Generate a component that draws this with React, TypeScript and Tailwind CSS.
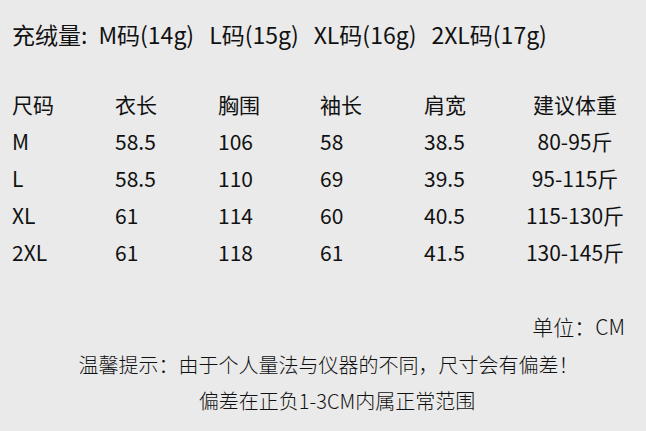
const FONT = "font-['Noto_Sans_CJK_SC','Noto_Sans',sans-serif]"

const rows = [
  ['M', '58.5', '106', '58', '38.5', '80-95斤'],
  ['L', '58.5', '110', '69', '39.5', '95-115斤'],
  ['XL', '61', '114', '60', '40.5', '115-130斤'],
  ['2XL', '61', '118', '61', '41.5', '130-145斤'],
]

const head = ['尺码', '衣长', '胸围', '袖长', '肩宽', '建议体重']

const fills = ['M码(14g)', 'L码(15g)', 'XL码(16g)', '2XL码(17g)']

function Row({ cells }: { cells: string[] }) {
  return (
    <div className="grid h-[37px] grid-cols-[103px_103px_102px_104px_99px_104px] items-center">
      {cells.map((c, i) => (
        <span key={i} className={i === 5 ? 'whitespace-nowrap text-center' : 'whitespace-nowrap'}>
          {c}
        </span>
      ))}
    </div>
  )
}

export default function App() {
  return (
    <div className={`h-[431px] w-[646px] overflow-hidden bg-[#eaeaea] text-[#111] ${FONT}`}>
      <div className="flex gap-[15px] pl-[12px] pt-[19px] text-[23px] leading-[30px]">
        <span className="mr-[-4px]">充绒量:</span>
        {fills.map((f) => (
          <span key={f}>{f}</span>
        ))}
      </div>

      <div className="mt-[37px] pl-[12px] text-[21px]">
        <Row cells={head} />
        {rows.map((r) => (
          <Row key={r[0]} cells={r} />
        ))}
      </div>

      <div className="mt-[43px] font-light text-[#111]">
        <div className="pr-[21px] text-right text-[21px] leading-[24px]">单位：CM</div>
        <div className="mt-[15px] pl-[11px] text-center text-[20px] leading-[24px]">
          温馨提示：由于个人量法与仪器的不同，尺寸会有偏差！
        </div>
        <div className="mt-[12px] pl-[28px] text-center text-[20px] leading-[24px]">偏差在正负1-3CM内属正常范围</div>
      </div>
    </div>
  )
}
